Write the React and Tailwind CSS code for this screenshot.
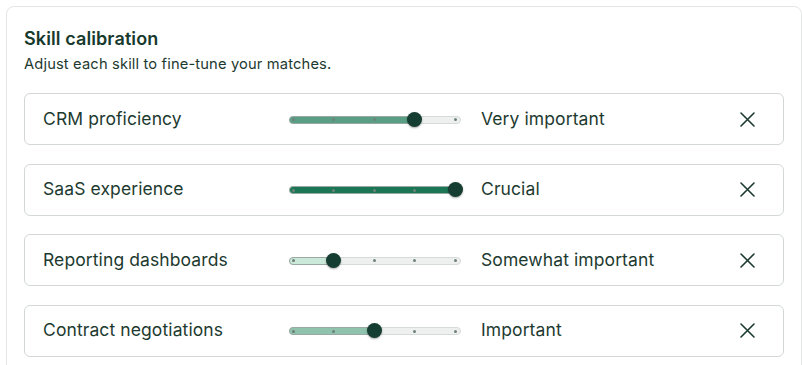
import React from 'react';

// Skill calibration card: each skill has a 5-step importance slider
const skills = [
    { name: 'CRM proficiency', level: 3, label: 'Very important' },
    { name: 'SaaS experience', level: 4, label: 'Crucial' },
    { name: 'Reporting dashboards', level: 1, label: 'Somewhat important' },
    { name: 'Contract negotiations', level: 2, label: 'Important' },
];

// fill colour gets darker the more important the skill is
const fillClasses = [
    'bg-[#e3f3eb]',
    'bg-[#cbe9db]',
    'bg-[#8fc3ad]',
    'bg-[#5a9e86]',
    'bg-[#1b7655]',
];

const START = 4;
const STEP = 40.5;

function ImportanceSlider({ level }) {
    const thumbX = START + level * STEP;

    return (
        <div className="relative h-[15px] w-[172px] shrink-0">
            <div className="absolute left-0 right-0 top-[4px] h-[8px] rounded-full border border-[#d6dbd8] bg-[#eef0ef]" />
            <div
                className={`absolute left-0 top-[4px] h-[8px] rounded-full border border-[#9aa8a2] ${fillClasses[level]}`}
                style={{ width: thumbX + 2 }}
            />
            {[0, 1, 2, 3, 4].map((i) => (
                <span
                    key={i}
                    className="absolute top-[6.5px] h-[3px] w-[3px] rounded-full bg-[#6e807a]"
                    style={{ left: START + i * STEP - 1.5 }}
                />
            ))}
            <span
                className="absolute top-0 h-[15px] w-[15px] rounded-full bg-[#163d31] shadow-[0_1px_2px_rgba(0,0,0,0.35)]"
                style={{ left: thumbX - 7.5 }}
            />
        </div>
    );
}

function SkillRow({ skill }) {
    return (
        <div className="flex h-[52px] items-center rounded-md border border-[#d3d8d5] bg-white pl-[18px] pr-[28px]">
            <span className="w-[246px] shrink-0 text-[17.5px] tracking-[0.1px] text-[#1d3a30]">{skill.name}</span>
            <ImportanceSlider level={skill.level} />
            <span className="ml-[20px] flex-1 text-[17.5px] tracking-[0.1px] text-[#1d3a30]">{skill.label}</span>
            <button className="flex h-[16px] w-[16px] items-center justify-center text-[#1d3a30]">
                <svg width="15" height="15" viewBox="0 0 15 15" fill="none" stroke="currentColor" strokeWidth="1.6" strokeLinecap="round">
                    <path d="M1 1l13 13M14 1L1 14" />
                </svg>
            </button>
        </div>
    );
}

export default function App() {
    return (
        <div className="h-[365px] w-[802px] overflow-hidden bg-white font-['Inter',sans-serif]">
            <div className="ml-[6px] mt-[6px] w-[796px] rounded-lg border border-[#e4e6e5] bg-white px-[17px] pb-6 pt-[20px]">
                <h2 className="text-[18px] font-semibold leading-6 tracking-[0.1px] text-[#173a2d]">Skill calibration</h2>
                <p className="mt-[3px] text-[14.7px] leading-5 tracking-[0.15px] text-[#1d3a30]">
                    Adjust each skill to fine-tune your matches.
                </p>
                <div className="mt-[19px] flex flex-col gap-[18.5px]">
                    {skills.map((skill) => (
                        <SkillRow key={skill.name} skill={skill} />
                    ))}
                </div>
            </div>
        </div>
    );
}
